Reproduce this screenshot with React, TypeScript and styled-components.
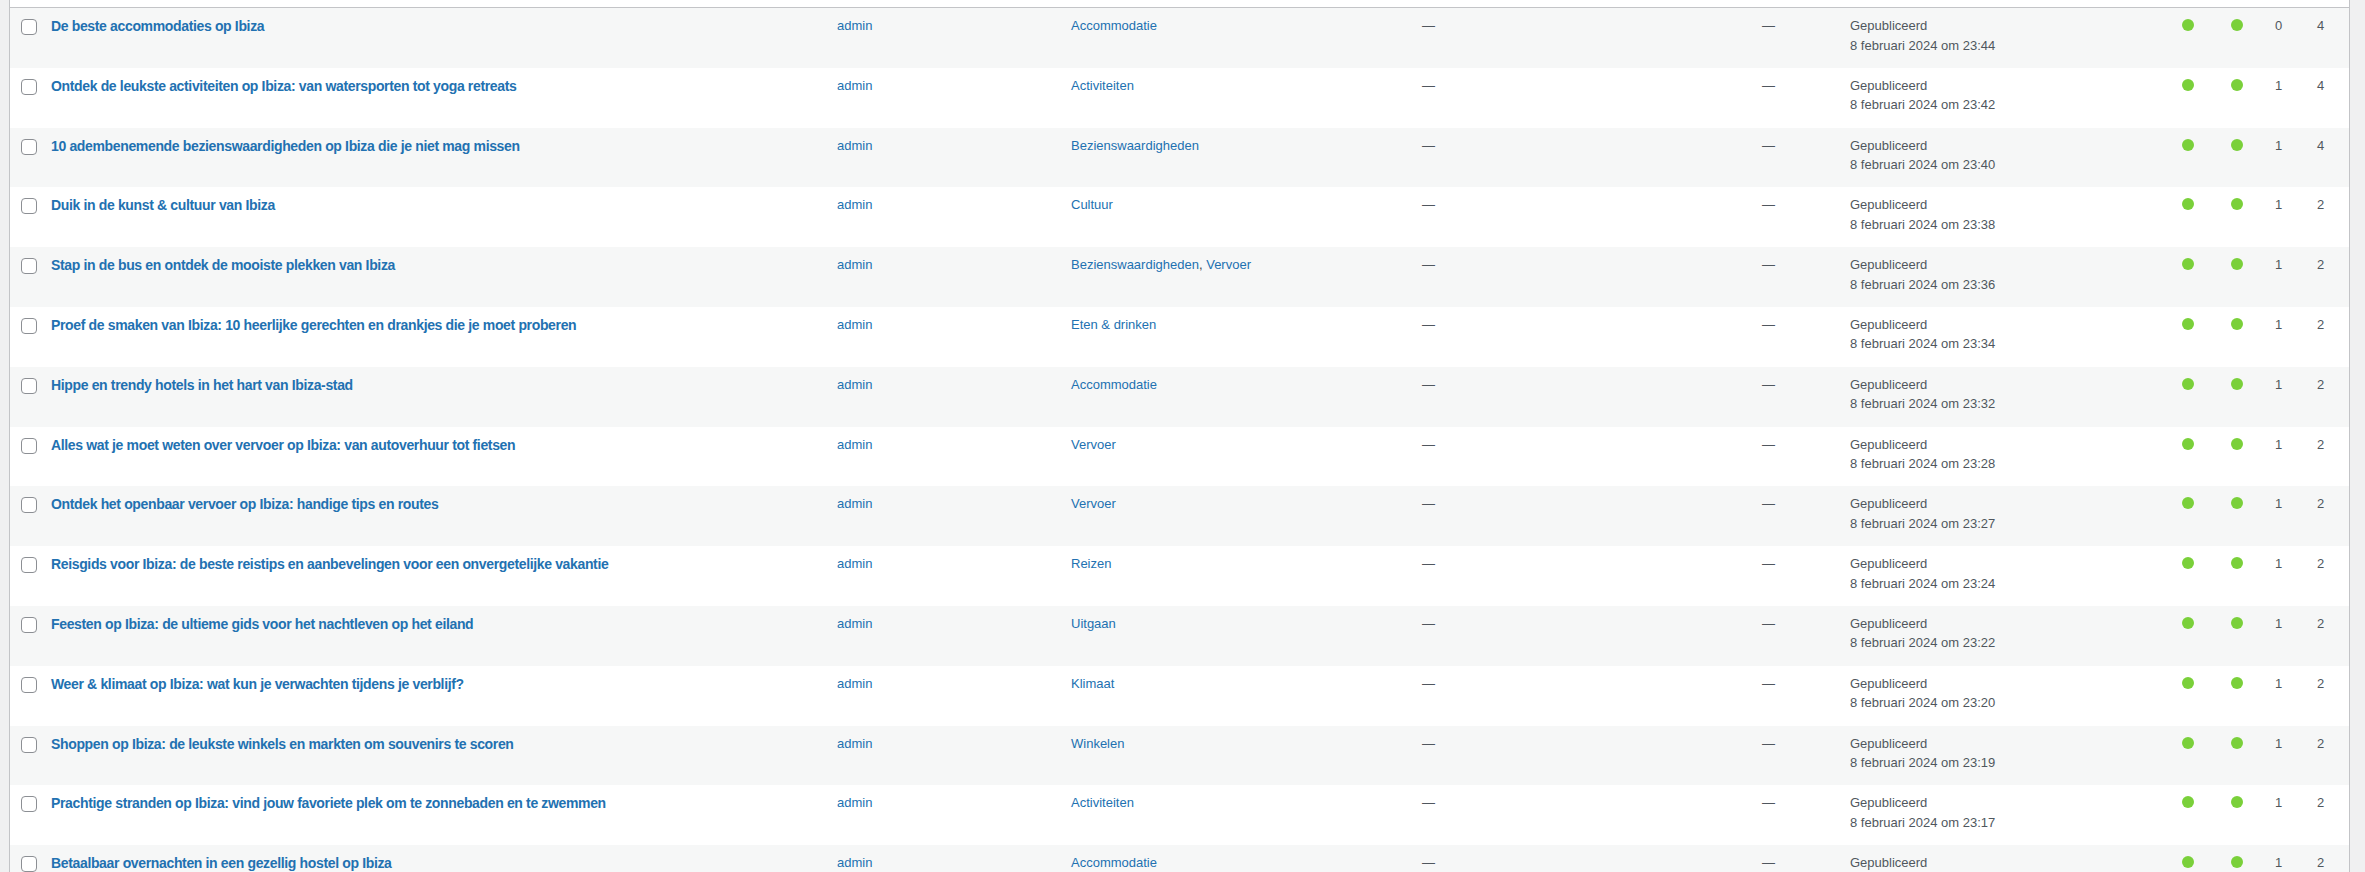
import * as React from 'react'
import styled, { createGlobalStyle } from 'styled-components'

const GlobalStyle = createGlobalStyle`
  html, body {
    margin: 0;
    padding: 0;
    background: #f0f0f1;
    height: 872px;
    overflow: hidden;
  }
  body {
    font-family: "Liberation Sans", Arial, sans-serif;
    font-size: 13px;
    line-height: 1.5;
    color: #3c434a;
  }
`

const ListTable = styled.div`
  margin-left: 9px;
  width: 2341px;
  border-left: 1px solid #c3c4c7;
  border-right: 1px solid #c3c4c7;
  background: #fff;
  box-sizing: border-box;
`

// bottom edge of the table head, scrolled out of view
const HeadTail = styled.div`
  height: 7px;
  background: #fff;
  border-bottom: 1px solid #c3c4c7;
`

const Row = styled('div')<{ alt?: boolean }>`
  display: grid;
  grid-template-columns: 31px 786px 234px 351px 340px 88px 329px 49px 47px 42px 1fr;
  height: 59.8px;
  background-color: ${p => (p.alt ? '#f6f7f7' : '#fff')};
`

const Cell = styled.div`
  padding: 8px 10px;
  overflow: hidden;
  white-space: nowrap;
`

const CheckCell = styled.div`
  padding: 8px 0 0 3px;
`

const Checkbox = styled.input.attrs({ type: 'checkbox' })`
  appearance: none;
  display: block;
  width: 16px;
  height: 16px;
  margin: 3px 0 0 8px;
  border: 1px solid #8c8f94;
  border-radius: 4px;
  background: #fff;
  box-sizing: border-box;
`

const Link = styled.a`
  color: #2271b1;
  text-decoration: none;
`

const RowTitle = styled(Link)`
  display: block;
  font-size: 14px;
  font-weight: 700;
  letter-spacing: -0.35px;
`

const Dash = styled.span`
  color: #50575e;
`

const DateText = styled.div`
  color: #50575e;
`

const ScoreDot = styled.span`
  display: block;
  width: 12px;
  height: 12px;
  margin: 3px 0 0 3px;
  border-radius: 50%;
  background: #7ad03a;
`

const Count = styled.span`
  color: #50575e;
`

type Post = {
  title: string
  cats: string[]
  time: string
  links: number
  linked: number
}

const posts: Post[] = [
  { title: 'De beste accommodaties op Ibiza', cats: ['Accommodatie'], time: '23:44', links: 0, linked: 4 },
  { title: 'Ontdek de leukste activiteiten op Ibiza: van watersporten tot yoga retreats', cats: ['Activiteiten'], time: '23:42', links: 1, linked: 4 },
  { title: '10 adembenemende bezienswaardigheden op Ibiza die je niet mag missen', cats: ['Bezienswaardigheden'], time: '23:40', links: 1, linked: 4 },
  { title: 'Duik in de kunst & cultuur van Ibiza', cats: ['Cultuur'], time: '23:38', links: 1, linked: 2 },
  { title: 'Stap in de bus en ontdek de mooiste plekken van Ibiza', cats: ['Bezienswaardigheden', 'Vervoer'], time: '23:36', links: 1, linked: 2 },
  { title: 'Proef de smaken van Ibiza: 10 heerlijke gerechten en drankjes die je moet proberen', cats: ['Eten & drinken'], time: '23:34', links: 1, linked: 2 },
  { title: 'Hippe en trendy hotels in het hart van Ibiza-stad', cats: ['Accommodatie'], time: '23:32', links: 1, linked: 2 },
  { title: 'Alles wat je moet weten over vervoer op Ibiza: van autoverhuur tot fietsen', cats: ['Vervoer'], time: '23:28', links: 1, linked: 2 },
  { title: 'Ontdek het openbaar vervoer op Ibiza: handige tips en routes', cats: ['Vervoer'], time: '23:27', links: 1, linked: 2 },
  { title: 'Reisgids voor Ibiza: de beste reistips en aanbevelingen voor een onvergetelijke vakantie', cats: ['Reizen'], time: '23:24', links: 1, linked: 2 },
  { title: 'Feesten op Ibiza: de ultieme gids voor het nachtleven op het eiland', cats: ['Uitgaan'], time: '23:22', links: 1, linked: 2 },
  { title: 'Weer & klimaat op Ibiza: wat kun je verwachten tijdens je verblijf?', cats: ['Klimaat'], time: '23:20', links: 1, linked: 2 },
  { title: 'Shoppen op Ibiza: de leukste winkels en markten om souvenirs te scoren', cats: ['Winkelen'], time: '23:19', links: 1, linked: 2 },
  { title: 'Prachtige stranden op Ibiza: vind jouw favoriete plek om te zonnebaden en te zwemmen', cats: ['Activiteiten'], time: '23:17', links: 1, linked: 2 },
  { title: 'Betaalbaar overnachten in een gezellig hostel op Ibiza', cats: ['Accommodatie'], time: '23:15', links: 1, linked: 2 },
]

const PostRow = ({ post, alt }: { post: Post; alt: boolean }) => (
  <Row alt={alt}>
    <CheckCell>
      <Checkbox />
    </CheckCell>
    <Cell>
      <RowTitle href="#">{post.title}</RowTitle>
    </Cell>
    <Cell>
      <Link href="#">admin</Link>
    </Cell>
    <Cell>
      {post.cats.map((c, i) => (
        <React.Fragment key={c}>
          {i > 0 && ', '}
          <Link href="#">{c}</Link>
        </React.Fragment>
      ))}
    </Cell>
    <Cell>
      <Dash>—</Dash>
    </Cell>
    <Cell>
      <Dash>—</Dash>
    </Cell>
    <Cell>
      <DateText>Gepubliceerd</DateText>
      <DateText>8 februari 2024 om {post.time}</DateText>
    </Cell>
    <Cell>
      <ScoreDot />
    </Cell>
    <Cell>
      <ScoreDot />
    </Cell>
    <Cell>
      <Count>{post.links}</Count>
    </Cell>
    <Cell>
      <Count>{post.linked}</Count>
    </Cell>
  </Row>
)

export default function App() {
  return (
    <>
      <GlobalStyle />
      <ListTable>
        <HeadTail />
        {posts.map((p, i) => (
          <PostRow key={p.title} post={p} alt={i % 2 === 0} />
        ))}
      </ListTable>
    </>
  )
}
